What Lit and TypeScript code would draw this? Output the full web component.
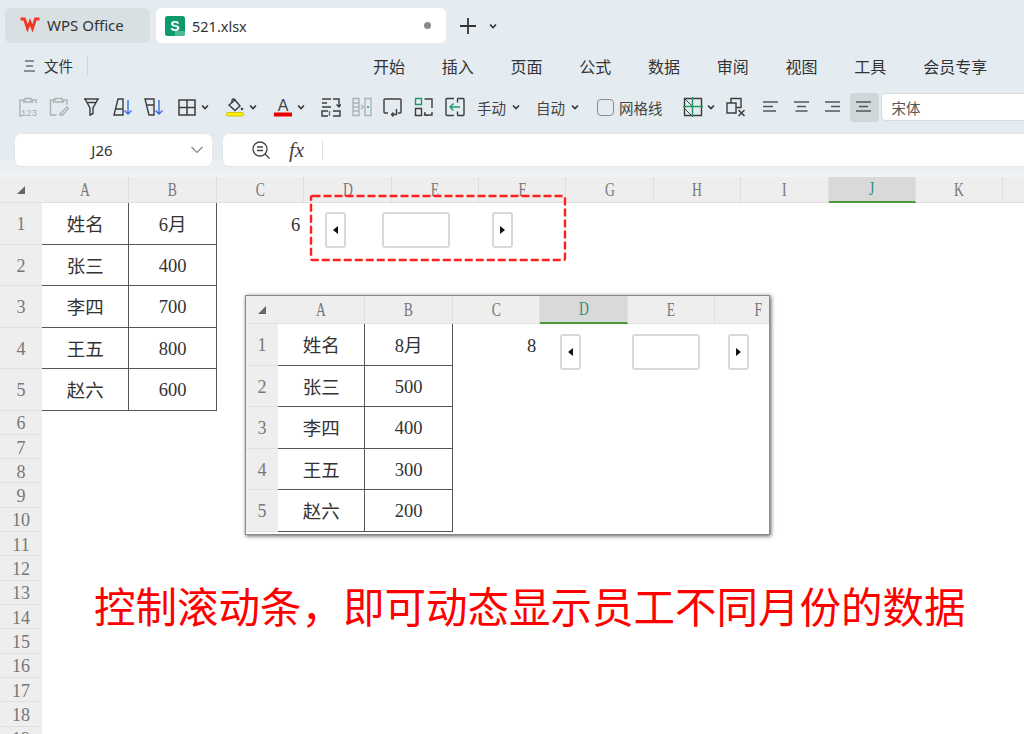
import { LitElement, css, html, svg } from 'lit'
import { customElement, property } from 'lit/decorators.js'

const CJK = css`"Noto Sans CJK SC"`

const caret = html`<svg class="caret" viewBox="0 0 10 10"><path d="M2 3.5l3 3 3-3" fill="none" stroke="#333" stroke-width="1.6"/></svg>`

const icon = (body: unknown) => html`<svg class="ic" viewBox="0 0 20 20" fill="none" stroke="#3c3c3c" stroke-width="1.4">${body}</svg>`

const icons = {
  paste123: svg`<g stroke="#aeb2b4"><path d="M5 3H2v16h2M15 3h3v3"/><path d="M7 3V1.5h6V3h1.5v2h-9V3z"/></g><text x="11" y="18.5" font-size="9.5" text-anchor="middle" fill="#a6aaac" stroke="none" font-family="Liberation Sans">123</text>`,
  pasteBrush: svg`<g stroke="#aeb2b4"><path d="M5 3H1.5v15h6M15 3h3v5"/><path d="M6 3V1.5h7V3h1.5v2h-10V3z"/><path d="M11 17l7-7 1.5 1.5-6 6.5h-2.5z"/></g>`,
  funnel: svg`<path d="M2 2h15M3 2l5 9v7l3-1.5V11l5-9M5.5 5.5h8"/>`,
  sortAsc: svg`<path d="M5 2h5v16H1zM3 12h7"/><path d="M15 3v14M11.5 13.5L15 17l3.5-3.5" stroke="#3a6ee8"/>`,
  sortDesc: svg`<path d="M1 2h9v16H5zM3 8h7"/><path d="M15 3v14M11.5 13.5L15 17l3.5-3.5" stroke="#3a6ee8"/>`,
  border: svg`<path d="M2 3h16v15H2zM10 3v15M2 10.5h16" stroke-width="1.5"/>`,
  fill: svg`<path d="M4 8l6-5 5 6-5 4.5z"/><path d="M7 6V3.5a1.5 1.5 0 0 1 3 0"/><circle cx="17" cy="12" r="1.3" fill="#444" stroke="none"/><rect x="1.5" y="15.5" width="17" height="3.5" rx="1" fill="#fff200" stroke="#c9b800" stroke-width=".8"/>`,
  fontColor: svg`<text x="10" y="13.5" font-size="16" text-anchor="middle" fill="#444" stroke="none" font-family="Liberation Sans">A</text><rect x="1" y="15.5" width="18" height="4" rx=".6" fill="#e80000" stroke="none"/>`,
  splitText: svg`<path d="M1 2h9M1 6h5M1 10h9"/><path d="M12 2h6v8M15.5 7.5l2.5 2.5 2-2.5"/><path d="M7 14H1v5h6"/><path d="M8.5 14v5" stroke="#1f9a66"/><path d="M12 14h7v5h-7"/>`,
  mergeOff: svg`<g stroke="#adb3b6"><path d="M1 1.5h6v17H1zM13 1.5h6v17h-6zM1 6h6M1 10h6M1 14h6"/><path d="M9 8l2.5 2L9 12"/></g><circle cx="16" cy="10" r="1" fill="#1f9a66" stroke="none"/>`,
  wrap: svg`<path d="M5 16H2a1 1 0 0 1-1-1V3a1 1 0 0 1 1-1h15a1 1 0 0 1 1 1v12a1 1 0 0 1-1 1h-2"/><path d="M13.5 12v5.500H8.500M10.500 15.500l-2 2 2 2"/>`,
  transpose: svg`<path d="M1.5 1.5h6v6h-6z" stroke="#1f9a66"/><path d="M10.5 2h7.500v9"/><path d="M1.5 11.5h6v7h-6z"/><path d="M10.5 18H18v-3M11 15l-.5 3 3 .5"/>`,
  arrowIn: svg`<path d="M9 1.5H2a1 1 0 0 0-1 1v15a1 1 0 0 0 1 1h7M12.5 1.5H18a1 1 0 0 1 1 1v15a1 1 0 0 1-1 1h-5.5M12.5 1.5v4M12.5 14.5v4"/><path d="M15 10H5M8.5 6.5L5 10l3.5 3.5" stroke="#1f9a66"/>`,
  freeze: svg`<path d="M1.5 1.5h17v17h-17z"/><path d="M2 2l7 7M2 12l6 6" stroke-width="1"/><path d="M0 9.5h20M9.5 0v20" stroke="#1f9a66" stroke-width="1.5"/>`,
  clearBox: svg`<path d="M1 6h9v10H1zM5 6V1.5h10v9h-5"/><path d="M12.5 13l6 6M18.5 13l-6 6" stroke-width="1.5"/>`,
  alignLeft: svg`<path d="M2 5h15M2 9.5h10M2 14h13" stroke="#555"/>`,
  alignCenter: svg`<path d="M2 5h15M5 9.5h9M3.5 14h12" stroke="#555"/>`,
  alignRight: svg`<path d="M2 5h15M8 9.5h9M2 14h15" stroke="#555"/>`,
  alignJustify: svg`<path d="M2 5h15M5 9.5h9M2 14h15" stroke="#555"/>`,
}

@customElement('x-sheet')
class XSheet extends LitElement {
  static styles = css`
    :host { display: block; position: relative; overflow: hidden; height: 100%; background: #fff; }
    .grid { display: grid; color: #333; font: 18.5px "Liberation Serif", ${CJK}, serif; }
    .corner, .col, .row { background: #eeeeee; color: #777; display: flex; align-items: center; justify-content: center; }
    .corner { border-bottom: 1px solid #e0e0e0; color: #666; }
    .col { border-right: 1px solid #dedede; border-bottom: 1px solid #e0e0e0; box-sizing: border-box; }
    .col span { display: inline-block; transform: scaleX(.72); font-size: 19px; }
    .col.sel { background: #d9d9d9; color: #2f8f78; border-bottom: 2px solid #4a9a3c; }
    .row { border-bottom: 1px solid #dfdfdf; box-sizing: border-box; font-size: 18px; padding-top: 3px; }
    .cell { display: flex; align-items: center; justify-content: center; box-sizing: border-box; min-width: 0; }
    .cell.tbl { border-right: 1px solid #555; border-bottom: 1px solid #555; }
    .cell.digits { padding-top: 3px; }
    .cell.num { justify-content: flex-end; padding: 3px 4px 0 0; }
    .spin { position: absolute; display: flex; height: 36px; }
    .main .spin { left: 325px; top: 35px; }
    .main .track { margin: 0 42px 0 36px; }
    .inset .spin { left: 314px; top: 38px; }
    .inset .track { margin: 0 28px 0 51px; }
    .btn, .track { box-sizing: border-box; background: #fff; border: 2px solid #d8d8d8; border-radius: 3px; display: flex; align-items: center; justify-content: center; }
    .btn { width: 21px; }
    .track { width: 68px; }
    .tl, .tr { width: 0; height: 0; border-top: 4px solid transparent; border-bottom: 4px solid transparent; }
    .tl { border-right: 5px solid #111; }
    .tr { border-left: 5px solid #111; }
  `

  @property({ type: Array }) cols: string[] = []
  @property({ type: Array }) data: string[][] = []
  @property({ type: Number }) rows = 5
  @property({ type: Number }) gutter = 42
  @property({ type: Number }) head = 26
  @property({ type: Number }) rowH = 41.5
  @property({ type: Number }) smallH = 24.33
  @property() selected = ''
  @property() value = ''
  @property() variant = 'main'

  render() {
    const rowList = Array.from({ length: this.rows }, (_, i) => i)
    const tracks = rowList.map((i) => `${i < 5 ? this.rowH : this.smallH}px`).join(' ')
    const layout = `grid-template-columns:${this.gutter}px repeat(${this.cols.length},87.4px);grid-template-rows:${this.head}px ${tracks}`
    return html`<div class=${this.variant}>
      <div class="grid" style=${layout}>
        <div class="corner"><svg width="10" height="10" viewBox="0 0 10 10"><path d="M9 1v8H1z" fill="#666"/></svg></div>
        ${this.cols.map((c) => html`<div class="col ${c === this.selected ? 'sel' : ''}"><span>${c}</span></div>`)}
        ${rowList.map((r) => html`
          <div class="row">${r + 1}</div>
          ${this.cols.map((_, c) => {
            const text = this.data[r]?.[c]
            if (text !== undefined) return html`<div class="cell tbl ${/^\d+$/.test(text) ? 'digits' : ''}">${text}</div>`
            if (r === 0 && c === 2) return html`<div class="cell num">${this.value}</div>`
            return html`<div class="cell"></div>`
          })}
        `)}
      </div>
      <div class="spin">
        <div class="btn"><i class="tl"></i></div>
        <div class="track"></div>
        <div class="btn"><i class="tr"></i></div>
      </div>
    </div>`
  }
}

@customElement('app-root')
class AppRoot extends LitElement {
  static styles = css`
    :host { display: block; width: 1024px; height: 734px; overflow: hidden; background: #fff; font-family: "Noto Sans", ${CJK}, sans-serif; color: #333; }
    .chrome { background: linear-gradient(#e4ecf1 0, #e4ecf1 155px, #f1f3f5 177px); height: 177px; box-sizing: border-box; padding-top: 8px; }

    .tabs { display: flex; height: 35px; padding-left: 5px; align-items: stretch; }
    .home { width: 145px; background: #d9e0e4; border-radius: 6px; display: flex; align-items: center; padding: 0 0 2px 15px; box-sizing: border-box; gap: 7px; font-size: 15px; }
    .file { width: 290px; margin-left: 6px; background: #fff; border-radius: 6px; display: flex; align-items: center; padding: 0 15px 0 9px; box-sizing: border-box; font-size: 14.5px; }
    .file .name { margin-left: 7px; flex: 1; }
    .dot { width: 7px; height: 7px; border-radius: 50%; background: #8a8a8a; }
    .add { margin-left: 13px; display: flex; align-items: center; gap: 11px; }

    .menu { height: 47px; box-sizing: border-box; padding-bottom: 2px; display: flex; align-items: center; font-family: ${CJK}, sans-serif; white-space: nowrap; overflow: hidden; }
    .menu-left { width: 373px; flex: none; display: flex; align-items: center; padding-left: 24px; box-sizing: border-box; font-size: 14.5px; }
    .menu-left .sep { width: 1px; height: 20px; background: #cfd6da; margin-left: 14px; }
    .menu-left span { margin-left: 9px; }
    .menu-items { display: flex; gap: 36.75px; font-size: 16px; }

    .tools { height: 34px; display: flex; align-items: center; padding-left: 18px; white-space: nowrap; overflow: hidden; font-family: ${CJK}, sans-serif; font-size: 14.5px; color: #444; }
    .ic { width: 20px; height: 20px; flex: none; }
    .caret { width: 10px; height: 10px; flex: none; }
    .g { display: flex; align-items: center; gap: 11px; flex: none; }
    .g10 { margin-right: 10px; }
    .g12 { margin-right: 12px; }
    .g13 { margin-right: 13px; }
    .g15 { margin-right: 15px; }
    .drop { display: flex; align-items: center; gap: 3px; flex: none; }
    .drop5 { gap: 5px; }
    .check { width: 17px; height: 17px; box-sizing: border-box; border: 1.5px solid #8c8c8c; border-radius: 4px; margin: 0 5px 0 2px; flex: none; }
    .label { margin-right: 20px; }
    .on { width: 29px; height: 29px; display: flex; align-items: center; justify-content: center; background: #cfd7db; border-radius: 4px; margin-left: 7px; flex: none; }
    .font { margin-left: 2px; width: 200px; height: 28px; flex: none; background: #fff; border-radius: 4px; box-sizing: border-box; padding-left: 10px; line-height: 27px; color: #555; border: 1px solid #d5dce0; }

    .formula { margin-top: 10px; height: 32px; display: flex; padding-left: 15px; gap: 11px; }
    .namebox { width: 197px; flex: none; background: #fff; border-radius: 6px; display: flex; align-items: center; justify-content: center; box-sizing: border-box; padding-right: 23px; position: relative; font-size: 15px; box-shadow: 0 0 0 1px #e3e8eb; }
    .namebox svg { position: absolute; right: 8px; top: 10px; }
    .bar { flex: 1; background: #fff; border-radius: 6px 0 0 6px; display: flex; align-items: center; padding-left: 29px; box-shadow: 0 0 0 1px #e3e8eb; }
    .fx { font: italic 21px "Liberation Serif", serif; margin-left: 18px; width: 20px; color: #444; }
    .bar .sep { width: 1px; height: 20px; background: #e2e2e2; margin-left: 13px; }

    .canvas { position: relative; height: 557px; }
    .dash { position: absolute; left: 309px; top: 17px; width: 258px; height: 68px; }
    .frame { position: absolute; left: 245px; top: 118px; width: 525px; height: 240px; overflow: hidden; box-sizing: border-box; border: 1px solid #8a8a8a; box-shadow: 1px 1px 4px rgba(0,0,0,.65); }
    .caption { position: absolute; left: 94px; top: 403px; font: 41.5px/50px ${CJK}, sans-serif; color: #ff0000; white-space: nowrap; }
  `

  render() {
    const sheet1 = [['姓名', '6月'], ['张三', '400'], ['李四', '700'], ['王五', '800'], ['赵六', '600']]
    const sheet2 = [['姓名', '8月'], ['张三', '500'], ['李四', '400'], ['王五', '300'], ['赵六', '200']]
    return html`
      <div class="chrome">
        <div class="tabs">
          <div class="home">
            <svg width="20" height="15" viewBox="0 0 20 15"><path d="M.5 2h4l3 9.500L10 5l2.500 6.500 3-9.500h4" fill="none" stroke="#ee3a24" stroke-width="2.800"/></svg>
            WPS Office
          </div>
          <div class="file">
            <svg width="20" height="20" viewBox="0 0 20 20">
              <rect width="20" height="20" rx="2.5" fill="#0c9a6c"/><path d="M10 15h10v2.500a2.500 2.500 0 0 1-2.500 2.500H10z" fill="#4dbb94"/>
              <text x="10" y="14.5" font-size="14" font-weight="700" text-anchor="middle" fill="#fff" font-family="Liberation Sans">S</text>
            </svg>
            <span class="name">521.xlsx</span>
            <i class="dot"></i>
          </div>
          <div class="add">
            <svg width="18" height="18" viewBox="0 0 18 18"><path d="M9 1v16M1 9h16" stroke="#333" stroke-width="1.8"/></svg>
            ${caret}
          </div>
        </div>

        <div class="menu">
          <div class="menu-left">
            <svg width="11" height="12" viewBox="0 0 11 12"><path d="M1 1h9M2 6h7M0 11h11" stroke="#333" stroke-width="1.2"/></svg>
            <span>文件</span><i class="sep"></i>
          </div>
          <div class="menu-items">
            ${['开始', '插入', '页面', '公式', '数据', '审阅', '视图', '工具', '会员专享', '流程'].map((t) => html`<div>${t}</div>`)}
          </div>
        </div>

        <div class="tools">
          <div class="g g13">${icon(icons.paste123)}${icon(icons.pasteBrush)}</div>
          <div class="g g13">${icon(icons.funnel)}${icon(icons.sortAsc)}${icon(icons.sortDesc)}</div>
          <div class="drop g15">${icon(icons.border)}${caret}</div>
          <div class="drop g15">${icon(icons.fill)}${caret}</div>
          <div class="drop g15">${icon(icons.fontColor)}${caret}</div>
          <div class="g g12">${icon(icons.splitText)}${icon(icons.mergeOff)}${icon(icons.wrap)}${icon(icons.transpose)}${icon(icons.arrowIn)}</div>
          <div class="drop drop5 g15">手动${caret}</div>
          <div class="drop drop5 g15">自动${caret}</div>
          <i class="check"></i>
          <div class="label">网格线</div>
          <div class="drop g10">${icon(icons.freeze)}${caret}</div>
          <div class="g g15">${icon(icons.clearBox)}</div>
          <div class="g">${icon(icons.alignLeft)}${icon(icons.alignCenter)}${icon(icons.alignRight)}</div>
          <div class="on">${icon(icons.alignJustify)}</div>
          <div class="font">宋体</div>
        </div>

        <div class="formula">
          <div class="namebox">J26
            <svg width="14" height="12" viewBox="0 0 14 12"><path d="M1.5 3l5.500 5.500L12.500 3" fill="none" stroke="#888" stroke-width="1.2"/></svg>
          </div>
          <div class="bar">
            <svg width="19" height="19" viewBox="0 0 19 19" fill="none" stroke="#444" stroke-width="1.3"><circle cx="8" cy="8" r="7"/><path d="M5 6h6M5 9.500h6M13 13l4.500 4.500"/></svg>
            <div class="fx">fx</div><i class="sep"></i>
          </div>
        </div>
      </div>

      <div class="canvas">
        <x-sheet
          .cols=${['A', 'B', 'C', 'D', 'E', 'F', 'G', 'H', 'I', 'J', 'K', '']}
          .data=${sheet1} .rows=${19} selected="J" value="6" variant="main"></x-sheet>
        <svg class="dash" viewBox="0 0 258 68" fill="none"><rect x="2" y="2" width="254" height="64" rx="1.5" stroke="#ff1f1f" stroke-width="2.4" stroke-dasharray="8 3"/></svg>
        <div class="frame">
          <x-sheet
            .cols=${['A', 'B', 'C', 'D', 'E', 'F']}
            .data=${sheet2} .rows=${5} .gutter=${32} .head=${28} selected="D" value="8" variant="inset"></x-sheet>
        </div>
        <div class="caption">控制滚动条，即可动态显示员工不同月份的数据</div>
      </div>
    `
  }
}
